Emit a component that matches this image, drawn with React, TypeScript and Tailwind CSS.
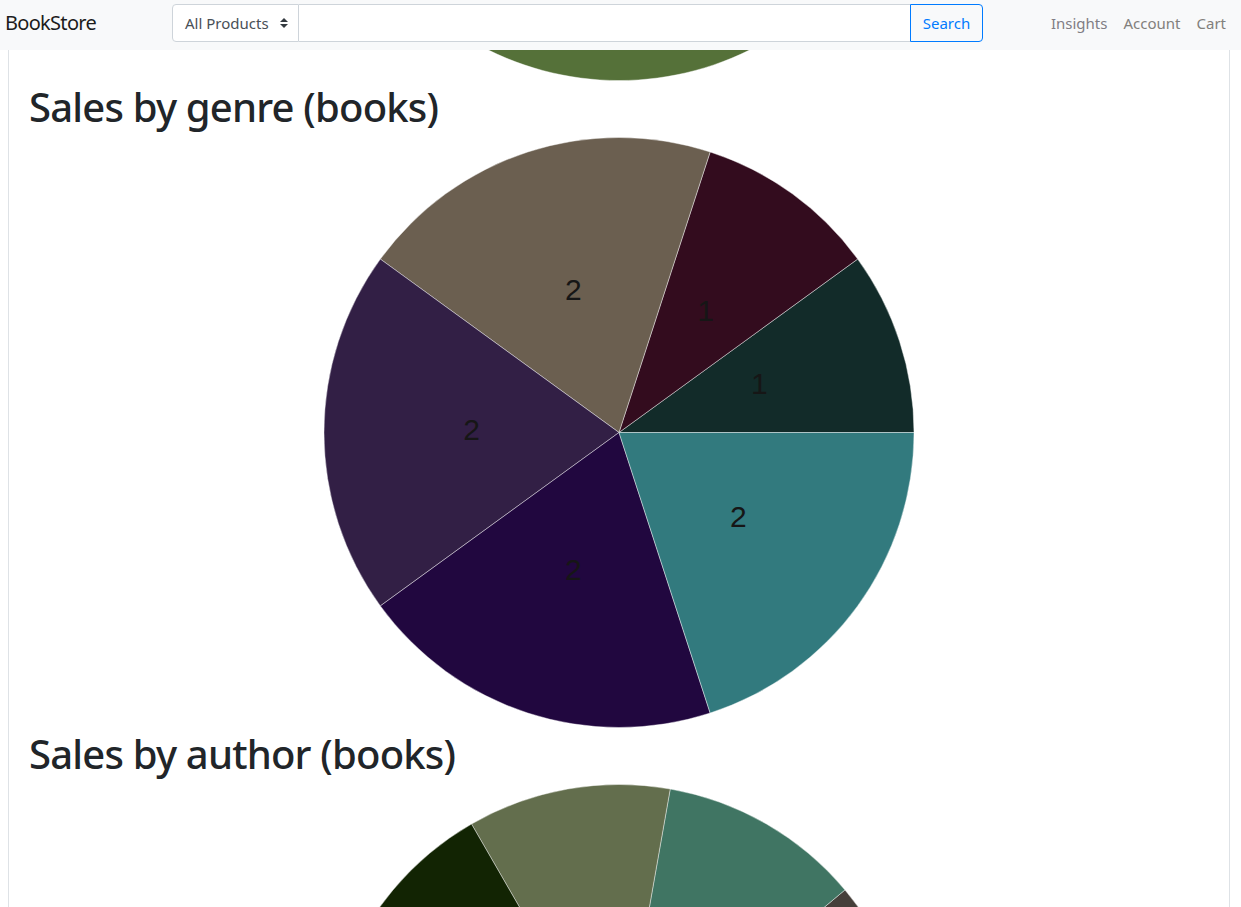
import React from "react";

type Slice = { a0: number; a1: number; color: string; label?: string };

const R = 295;
const CX = 300;
const CY = 295.5;

function pt(r: number, deg: number): [number, number] {
  const rad = (deg * Math.PI) / 180;
  return [CX + r * Math.cos(rad), CY - r * Math.sin(rad)];
}

function slicePath(a0: number, a1: number) {
  const [x0, y0] = pt(R, a0);
  const [x1, y1] = pt(R, a1);
  const large = a1 - a0 > 180 ? 1 : 0;
  return `M ${CX} ${CY} L ${x0} ${y0} A ${R} ${R} 0 ${large} 0 ${x1} ${y1} Z`;
}

function Pie({ slices }: { slices: Slice[] }) {
  return (
    <svg width={600} height={591} viewBox="0 0 600 591" className="block">
      {slices.map((s, i) => (
        <path key={i} d={slicePath(s.a0, s.a1)} fill={s.color} stroke="#ffffff" strokeWidth={0.6} strokeOpacity={0.7} />
      ))}
      {slices.map((s, i) => {
        if (!s.label) return null;
        const [x, y] = pt(R / 2, (s.a0 + s.a1) / 2);
        return (
          <text
            key={"t" + i}
            x={x}
            y={y - 3}
            textAnchor="middle"
            dominantBaseline="central"
            fontFamily="'Liberation Sans', Arial, sans-serif"
            fontSize={30}
            fill="#161616"
          >
            {s.label}
          </text>
        );
      })}
    </svg>
  );
}

const topSlices: Slice[] = [{ a0: 0, a1: 359.99, color: "#557139" }];

const genreSlices: Slice[] = [
  { a0: 0, a1: 36, color: "#122b29", label: "1" },
  { a0: 36, a1: 72, color: "#330c1e", label: "1" },
  { a0: 72, a1: 144, color: "#6b5f50", label: "2" },
  { a0: 144, a1: 216, color: "#321f45", label: "2" },
  { a0: 216, a1: 288, color: "#21073f", label: "2" },
  { a0: 288, a1: 360, color: "#327a7e", label: "2" },
];

const authorSlices: Slice[] = [
  { a0: 0, a1: 40, color: "#453f3a" },
  { a0: 40, a1: 80, color: "#407563" },
  { a0: 80, a1: 120, color: "#636e4d" },
  { a0: 120, a1: 160, color: "#122403" },
  { a0: 160, a1: 200, color: "#5a3d52" },
  { a0: 200, a1: 240, color: "#2d4a6b" },
  { a0: 240, a1: 280, color: "#6b3a2a" },
  { a0: 280, a1: 320, color: "#3b2f5c" },
  { a0: 320, a1: 360, color: "#5c6b2f" },
];

function UpDown() {
  return (
    <svg width="8" height="10" viewBox="0 0 4 5" className="block">
      <path d="M2 0L0 2h4zm0 5L0 3h4z" fill="#343a40" />
    </svg>
  );
}

export default function App() {
  const font = { fontFamily: "'Noto Sans', 'Open Sans', sans-serif" };
  return (
    <div className="h-screen w-full overflow-hidden flex flex-col bg-white" style={font}>
      <nav className="h-[50px] shrink-0 bg-[#f8f9fa] flex items-start pt-[4px] pl-[5px] pr-[7px] z-10">
        <span className="h-[38px] flex items-center text-[20px] leading-none text-[#1c1c1c] w-[167px] tracking-[-0.7px]">
          BookStore
        </span>
        <div className="flex h-[38px] w-[811px]">
          <div className="w-[127px] h-full border border-[#ced4da] rounded-l-[4px] bg-white flex items-center pl-[12px] pr-[10px] justify-between">
            <span className="text-[15px] text-[#495057]">All Products</span>
            <UpDown />
          </div>
          <div className="flex-1 h-full border-y border-[#ced4da] bg-white" />
          <div className="w-[73px] h-full border border-[#007bff] rounded-r-[4px] flex items-center justify-center text-[15px] text-[#007bff]">
            Search
          </div>
        </div>
        <div className="ml-auto h-[38px] flex items-center text-[15px] text-[#807d84]">
          <span className="px-2">Insights</span>
          <span className="px-2 text-[#82807c]">Account</span>
          <span className="px-2 text-[#82807c]">Cart</span>
        </div>
      </nav>
      <div className="flex-1 overflow-hidden">
        <div className="ml-[8px] w-[1222px] border-x border-[#dee2e6] px-[20px] -mt-[560.5px]">
          <div className="flex justify-center">
            <Pie slices={topSlices} />
          </div>
          <h2 className="pt-[2px] text-[40px] leading-[48px] font-medium text-[#212529] mb-[6px] tracking-[-0.8px]">
            Sales by genre (books)
          </h2>
          <div className="flex justify-center">
            <Pie slices={genreSlices} />
          </div>
          <h2 className="pt-[2px] text-[40px] leading-[48px] font-medium text-[#212529] mb-[6px] tracking-[-0.8px]">
            Sales by author (books)
          </h2>
          <div className="flex justify-center">
            <Pie slices={authorSlices} />
          </div>
        </div>
      </div>
    </div>
  );
}
